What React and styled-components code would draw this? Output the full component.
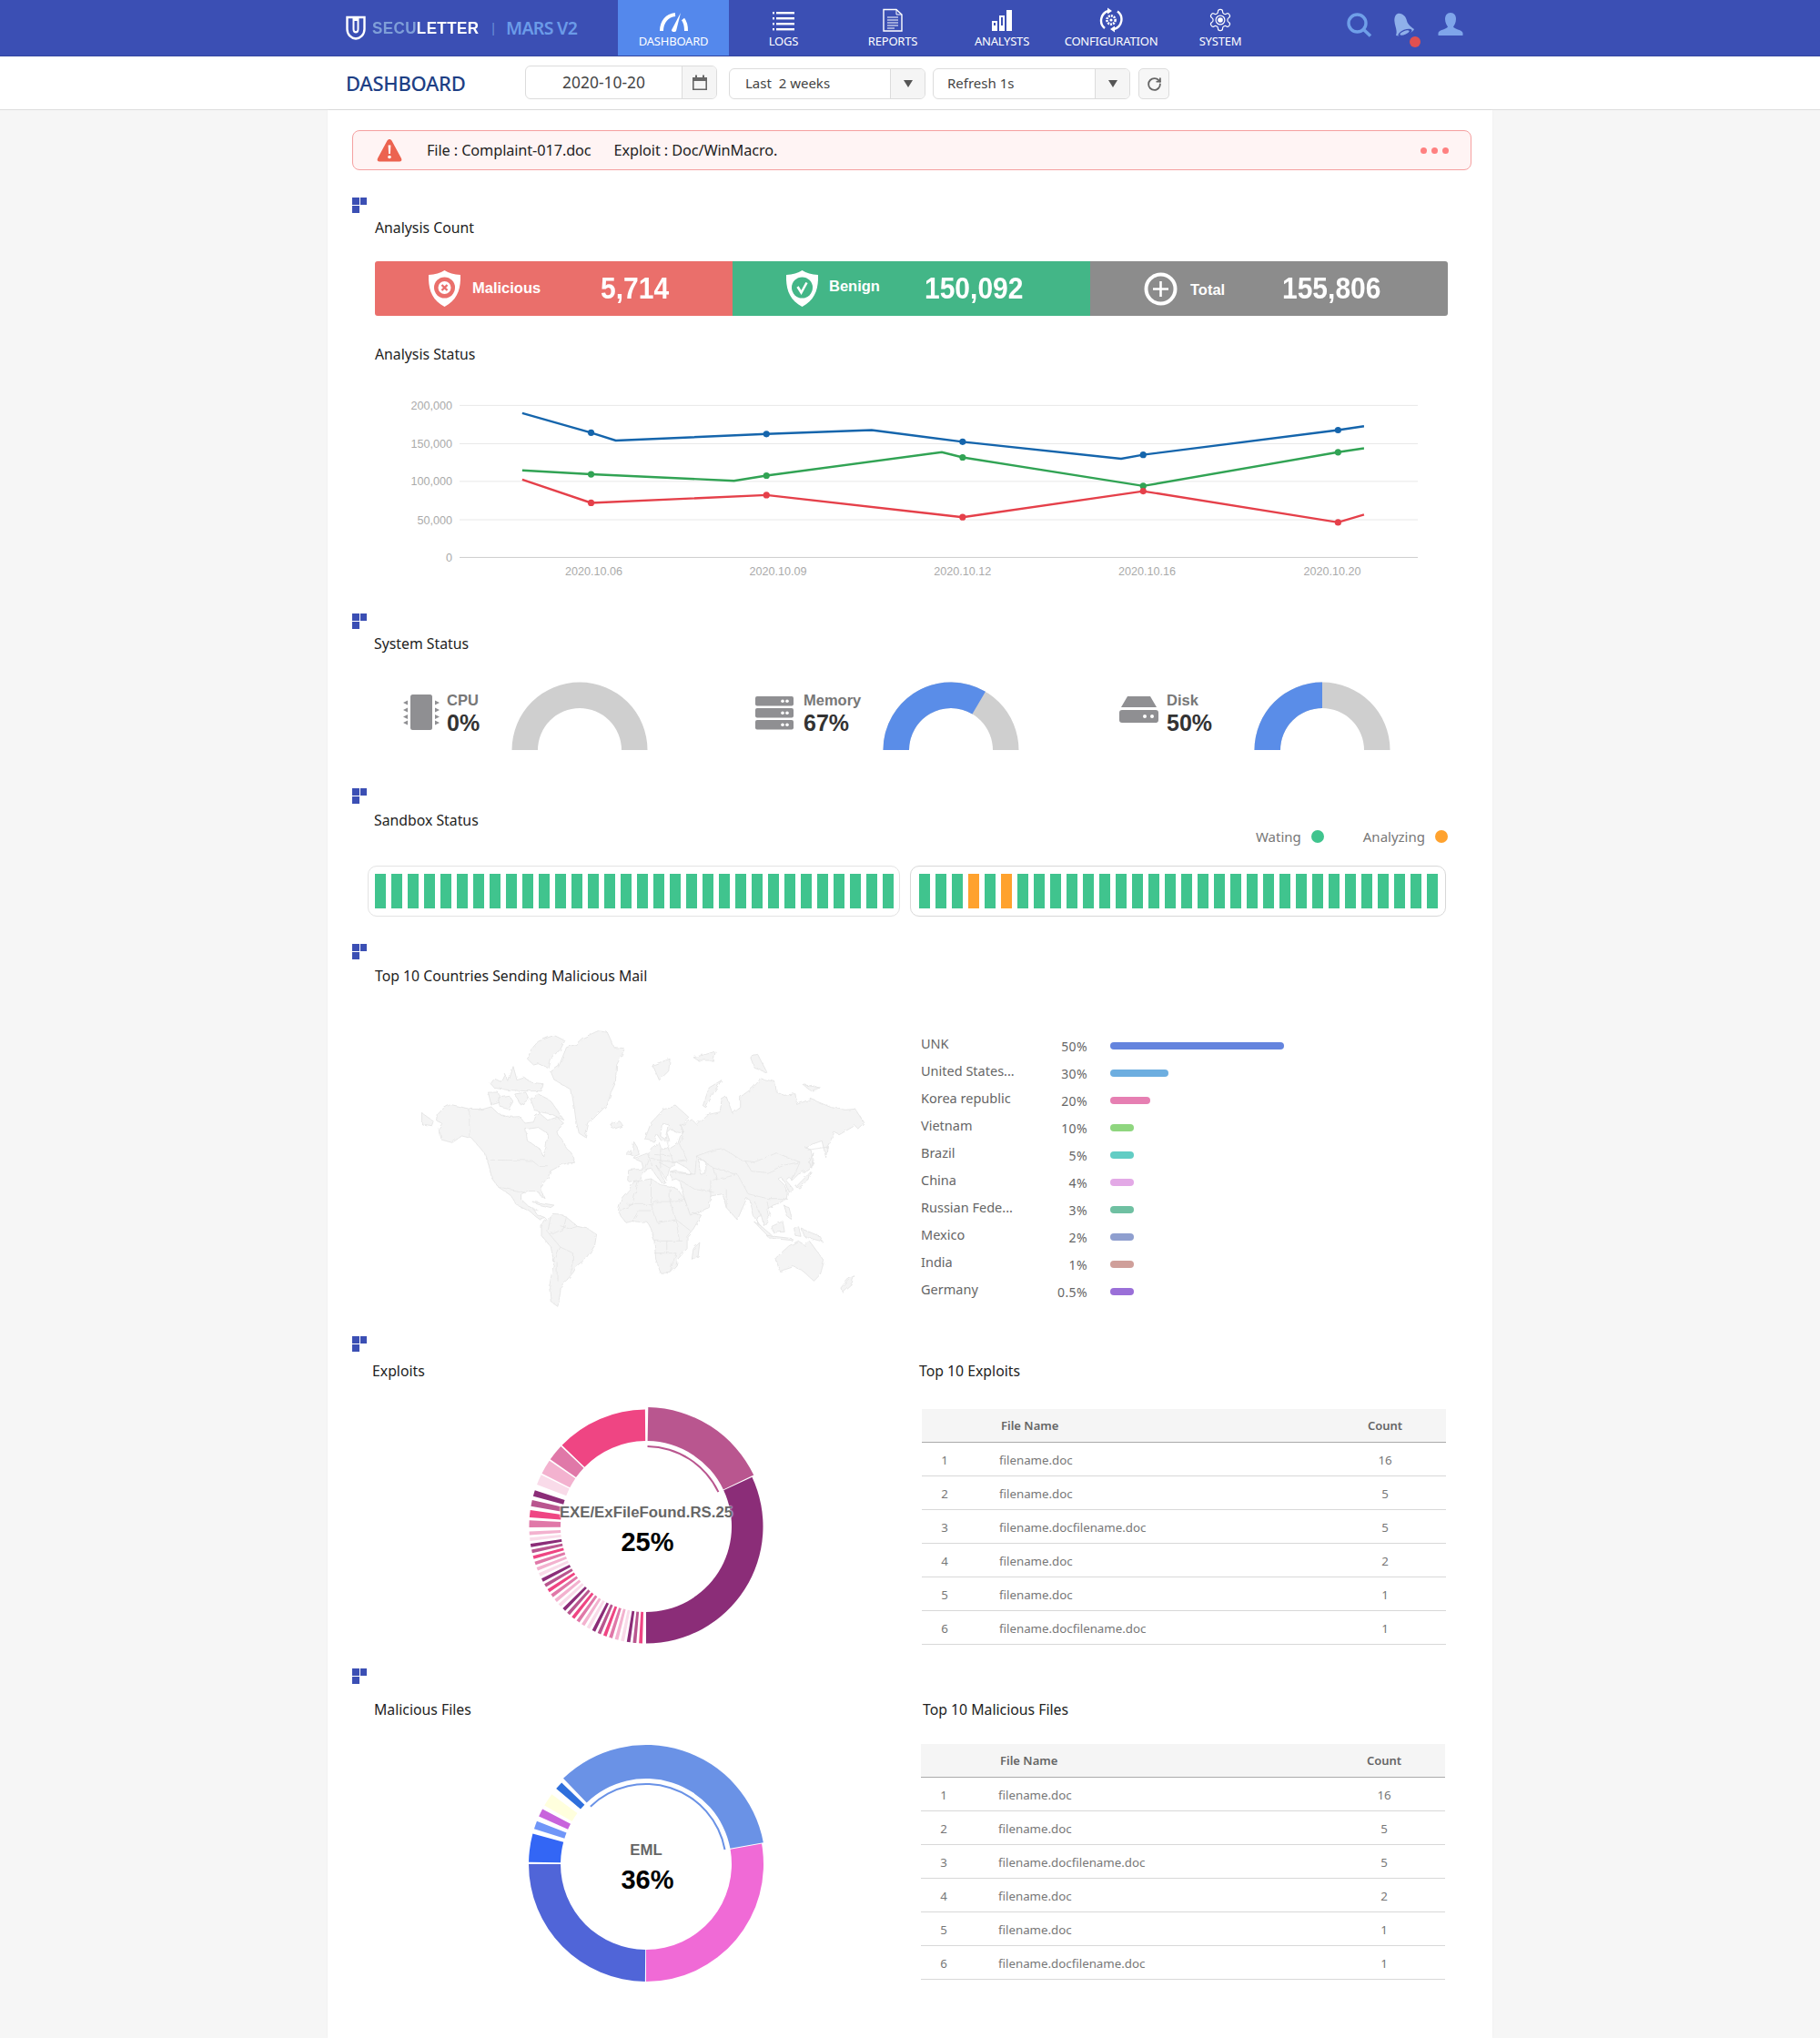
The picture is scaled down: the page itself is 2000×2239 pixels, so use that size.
import React from "react"
import styled, { createGlobalStyle } from "styled-components"
import { RotateCw } from "lucide-react"

const GlobalStyle = createGlobalStyle`
  html, body {
    margin: 0;
    padding: 0;
    background: #f6f6f6;
    font-family: "Noto Sans", "Open Sans", sans-serif;
  }
  * { box-sizing: border-box; }
`

const Header = styled.header`
  display: flex;
  height: 62px;
  padding-left: 380px;
  background: #3b4fb4;
  border-bottom: 1px solid #33459f;
`
const Logo = styled.div`
  display: flex;
  align-items: center;
  width: 299px;
  height: 61px;
  svg { margin-right: 7px; }
`
const LogoWord = styled.span`
  font: bold 17px "Liberation Sans", sans-serif;
  letter-spacing: 0.4px;
  color: #fff;
  transform: scaleY(1.1);
  em { font-style: normal; color: #7f9fd8; }
`
const LogoBar = styled.span`
  margin: 0 12px 0 14px;
  font: 14px "Liberation Sans", sans-serif;
  color: #6c90d8;
`
const LogoProduct = styled.span`
  font: 600 19.5px "Noto Sans", sans-serif;
  letter-spacing: -0.7px;
  color: #6b9be8;
`
const NavItem = styled.div`
  display: flex;
  flex-direction: column;
  align-items: center;
  width: ${p => (p.$active ? "122px" : "120px")};
  height: 61px;
  padding-top: 8px;
  background: ${p => (p.$active ? "#5488ec" : "transparent")};
  color: #fff;
  font-size: 13px;
  letter-spacing: -0.2px;
  svg { display: block; height: 28px; }
  span { line-height: 18px; margin-top: 0; }
`
const HeaderTools = styled.div`
  display: flex;
  margin-left: 79px;
  padding-top: 14px;
  gap: 23px;
`
const Bell = styled.div`
  position: relative;
  width: 26px;
  height: 28px;
`
const BellDot = styled.i`
  position: absolute;
  left: 18px;
  top: 26px;
  width: 12px;
  height: 12px;
  border-radius: 50%;
  background: #e05050;
`

const SubBar = styled.div`
  display: flex;
  align-items: flex-start;
  height: 59px;
  padding: 10px 0 0 380px;
  background: #fff;
  border-bottom: 1px solid #ddd;
`
const PageTitle = styled.h1`
  width: 197px;
  margin: 0;
  font-size: 22px;
  font-weight: 500;
  line-height: 39px;
  letter-spacing: -0.3px;
  color: #1e3f85;
`
const Control = styled.div`
  display: flex;
  width: ${p => p.$w}px;
  height: ${p => p.$h}px;
  margin-top: ${p => p.$top}px;
  margin-right: ${p => p.$gap}px;
  border: 1px solid #dcdcdc;
  border-radius: 6px;
  overflow: hidden;
  font-size: ${p => p.$size || 15}px;
  color: #444;
  background: #fff;
`
const ControlText = styled.div`
  flex: 1;
  line-height: ${p => p.$h - 3}px;
  padding-left: ${p => p.$pad}px;
  text-align: ${p => p.$align || "left"};
`
const ControlButton = styled.div`
  display: flex;
  align-items: center;
  justify-content: center;
  width: ${p => p.$w}px;
  border-left: 1px solid #dcdcdc;
  background: #f5f5f5;
  color: #5a5a5a;
`
const Caret = styled.i`
  width: 0;
  height: 0;
  border-left: 5px solid transparent;
  border-right: 5px solid transparent;
  border-top: 8px solid #555;
`
const ReloadButton = styled.div`
  display: flex;
  align-items: center;
  justify-content: center;
  width: 34px;
  height: 34px;
  margin-top: 3px;
  border: 1px solid #dcdcdc;
  border-radius: 5px;
  background: #f7f7f7;
  color: #666;
`

const Panel = styled.main`
  width: 1280px;
  min-height: 2118px;
  margin: 0 auto;
  padding: 22px 23px 20px 27px;
  background: #fff;
  box-shadow: 0 0 2px rgba(0, 0, 0, 0.05);
`
const Alert = styled.div`
  position: relative;
  display: flex;
  align-items: center;
  height: 44px;
  padding-left: 26px;
  border: 1px solid #f5a0a0;
  border-radius: 8px;
  background: #fff4f4;
  font-size: 16.3px;
  color: #222;
  letter-spacing: -0.1px;
  span { margin-right: 25px; }
  svg { margin-right: 27px; }
`
const Dots = styled.div`
  position: absolute;
  right: 24px;
  top: 18px;
  display: flex;
  gap: 5px;
  i {
    width: 7px;
    height: 7px;
    border-radius: 50%;
    background: #ff8080;
  }
`
const Section = styled.section`
  margin-top: ${p => p.$top}px;
`
const Marker = styled.div`
  display: grid;
  grid-template-columns: 7.5px 7.5px;
  grid-template-rows: 8px 8px;
  gap: 1px;
  width: 16px;
  height: 17px;
  i { background: #3b4fb4; }
`
const Title = styled.h3`
  margin: ${p => p.$top || 0}px 0 0 ${p => p.$left || 0}px;
  font-size: 15.8px;
  font-weight: 400;
  line-height: 24px;
  color: #222;
`
const CountBar = styled.div`
  display: flex;
  width: 1179px;
  height: 60px;
  margin: 25px 0 0 25px;
  border-radius: 3px;
  overflow: hidden;
  font-family: "Liberation Sans", sans-serif;
  color: #fff;
  font-weight: bold;
`
const CountCell = styled.div`
  display: flex;
  align-items: center;
  flex: 1;
  padding-left: 59px;
  background: ${p => p.$bg};
`
const CountLabel = styled.span`
  width: ${p => p.$w}px;
  margin-left: ${p => p.$gap}px;
  font-size: 16.5px;
  transform: translateY(${p => p.$shift}px);
`
const CountValue = styled.span`
  font-size: 30px;
  transform: scaleY(1.1);
`
const ChartBox = styled.div`
  height: 230px;
  margin: 19px 0 0 25px;
  svg { display: block; }
`
const StatusRow = styled.div`
  display: flex;
  margin-top: 30px;
  padding-left: 56px;
`
const StatusItem = styled.div`
  display: flex;
  margin-right: ${p => p.$gap}px;
`
const StatusIcon = styled.div`
  width: ${p => p.$w}px;
  padding-top: ${p => p.$top}px;
  svg { display: block; }
`
const StatusText = styled.div`
  width: ${p => p.$w}px;
  padding-top: 10px;
  font-family: "Liberation Sans", sans-serif;
  b { display: block; font-size: 16.5px; line-height: 20px; color: #777; }
  strong { display: block; font-size: 25px; line-height: 31px; color: #333; }
`
const Legend = styled.div`
  display: flex;
  justify-content: flex-end;
  gap: 43px;
  height: 20px;
  margin-top: -4px;
  padding-right: 26px;
  font-size: 15px;
  color: #777;
`
const LegendItem = styled.div`
  display: flex;
  align-items: center;
  gap: 11px;
  line-height: 20px;
  i {
    width: 14px;
    height: 14px;
    border-radius: 50%;
    background: ${p => p.$color};
  }
`
const SandboxRow = styled.div`
  display: flex;
  gap: 11px;
  margin: 22px 0 0 17px;
`
const SandboxBox = styled.div`
  display: flex;
  justify-content: space-between;
  width: ${p => p.$w}px;
  height: 56px;
  padding: 7.5px ${p => p.$pr}px 8.5px ${p => p.$pl}px;
  border: 1.5px solid ${p => p.$line};
  border-radius: 10px;
`
const SandboxBar = styled.i`
  width: 12.4px;
  background: ${p => (p.$busy ? "#ffa22e" : "#40c48e")};
`
const CountryRow = styled.div`
  display: flex;
  margin-top: 36px;
`
const MapBox = styled.div`
  width: 540px;
  height: 340px;
  margin-left: 53px;
  svg { display: block; }
`
const CountryList = styled.div`
  margin-left: 32px;
  padding-top: 14px;
`
const CountryLine = styled.div`
  display: flex;
  align-items: center;
  height: 30px;
  font-size: 14.5px;
  color: #666;
`
const CountryName = styled.span`
  width: 130px;
  padding-bottom: 6px;
  white-space: nowrap;
`
const CountryPct = styled.span`
  width: 53px;
  font-size: 14px;
  letter-spacing: 0.4px;
  text-align: right;
`
const CountryBar = styled.i`
  height: 8px;
  margin-left: 25px;
  border-radius: 4px;
  background: ${p => p.$color};
`
const SplitRow = styled.div`
  display: flex;
  margin-top: ${p => p.$top}px;
  height: ${p => p.$h}px;
`
const LeftColumn = styled.div`
  width: ${p => p.$w}px;
`
const RightColumn = styled.div`
  flex: 1;
`
const DonutBox = styled.div`
  position: relative;
  width: 300px;
  height: 290px;
  margin: ${p => p.$top}px 0 0 173px;
  svg { display: block; }
`
const DonutLabel = styled.div`
  position: absolute;
  left: -40px;
  right: -40px;
  top: ${p => p.$top}px;
  text-align: center;
  white-space: nowrap;
  font: bold 16.8px/22px "Liberation Sans", sans-serif;
  color: #666;
  text-shadow: 0 0 2px #fff, 0 0 2px #fff;
`
const DonutValue = styled.div`
  position: absolute;
  left: 0;
  right: 0;
  top: ${p => p.$top}px;
  padding-left: 3px;
  text-align: center;
  font: bold 29px/34px "Liberation Sans", sans-serif;
  color: #000;
`
const TableTitle = styled(Title)`
  margin: 0;
  padding-left: ${p => p.$left}px;
`
const DataTable = styled.table`
  width: 576px;
  margin: ${p => p.$top}px 0 0 ${p => p.$left}px;
  border-collapse: collapse;
  table-layout: fixed;
  font-size: 13.3px;
  color: #777;
  th {
    height: 36px;
    background: #f5f5f5;
    border-bottom: 1px solid #aaa;
    font-size: 13px;
    font-weight: 600;
    color: #666;
    text-align: left;
  }
  td {
    height: 37px;
    padding: 2px 0 0;
    border-bottom: 1px solid #d8d8d8;
  }
`
const IndexCell = styled.td`
  text-align: center;
`
const NameCell = styled.td`
  padding-left: 35px !important;
`
const NameHead = styled.th`
  padding-left: 37px !important;
`
const CountHead = styled.th`
  text-align: center !important;
`
const CountCellTd = styled.td`
  text-align: center;
`

const Icons = {
  Logo: () => (
    <svg width="22" height="27" viewBox="0 0 22 27">
      <path d="M1.5 2 H20.5 V15 C20.5 21 16 25 11 25.5 C6 25 1.5 21 1.5 15 Z" fill="none" stroke="#fff" strokeWidth="2.4" />
      <path d="M7.5 2 V15 C7.5 18 9 19.5 11 19.5 C13 19.5 14.5 18 14.5 15 V2" fill="#fff" />
      <path d="M9.5 6 V15 C9.5 16.5 10 17 11 17 C12 17 12.5 16.5 12.5 15 V6 Z" fill="#3b4fb4" />
    </svg>
  ),
  Gauge: () => (
    <svg width="32" height="28" viewBox="0 0 32 28">
      <path d="M3 26 C3 16 9 9 18 8" fill="none" stroke="#fff" strokeWidth="4" />
      <path d="M26.5 13 C29 16 30 21 30 26" fill="none" stroke="#fff" strokeWidth="4" />
      <path d="M24 6 L19 26 C18 28 13.5 27 14 25 Z" fill="#fff" />
    </svg>
  ),
  Logs: () => (
    <svg width="24" height="28" viewBox="0 0 24 28" fill="#fff">
      <rect x="0" y="5" width="2" height="2.4" /><rect x="4" y="5" width="20" height="2.4" />
      <rect x="0" y="11" width="2" height="2.4" /><rect x="4" y="11" width="20" height="2.4" />
      <rect x="0" y="17" width="2" height="2.4" /><rect x="4" y="17" width="20" height="2.4" />
      <rect x="0" y="23" width="2" height="2.4" /><rect x="4" y="23" width="20" height="2.4" />
    </svg>
  ),
  Report: () => (
    <svg width="22" height="28" viewBox="0 0 22 28" fill="none" stroke="#fff">
      <path d="M1 2.5 H15 L21 8 V26 H1 Z" strokeWidth="1.4" />
      <path d="M15 2.5 V8 H21" strokeWidth="1" />
      <path d="M5 11 H17 M5 14 H17 M5 17 H17 M5 20 H17 M5 23 H13" strokeWidth="1.1" />
    </svg>
  ),
  Bars: () => (
    <svg width="24" height="28" viewBox="0 0 24 28" fill="#fff">
      <rect x="1" y="15" width="6" height="11" />
      <rect x="3" y="17" width="2" height="3" fill="#3b4fb4" />
      <path d="M9 9 H15 V26 H9 Z M11 11 V20 H13 V11 Z" fillRule="evenodd" />
      <rect x="17" y="3" width="6" height="23" />
    </svg>
  ),
  Config: () => (
    <svg width="26" height="28" viewBox="0 0 26 28" fill="none" stroke="#fff">
      <path d="M6 23 A11 11 0 0 1 10 4" strokeWidth="2.4" />
      <path d="M20 4.5 A11 11 0 0 1 16 24" strokeWidth="2.4" />
      <path d="M9 0.5 L14 4 L9 7.5 Z M17 20.5 L12 24 L17 27.5 Z" fill="#fff" stroke="none" />
      <circle cx="13" cy="14" r="4.6" strokeWidth="2.6" strokeDasharray="2 1" />
      <circle cx="13" cy="14" r="1.6" fill="#fff" stroke="none" />
    </svg>
  ),
  Gear: () => (
    <svg width="28" height="28" viewBox="0 0 24 24" fill="none" stroke="#fff" strokeWidth="1">
      <path d="M12.2 2h-.4a2 2 0 0 0-2 2v.2a2 2 0 0 1-1 1.7l-.4.3a2 2 0 0 1-2 0l-.2-.1a2 2 0 0 0-2.7.7l-.2.4a2 2 0 0 0 .7 2.7l.2.1a2 2 0 0 1 1 1.7v.5a2 2 0 0 1-1 1.8l-.2.1a2 2 0 0 0-.7 2.7l.2.4a2 2 0 0 0 2.7.7l.2-.1a2 2 0 0 1 2 0l.4.3a2 2 0 0 1 1 1.7v.2a2 2 0 0 0 2 2h.4a2 2 0 0 0 2-2v-.2a2 2 0 0 1 1-1.7l.4-.3a2 2 0 0 1 2 0l.2.1a2 2 0 0 0 2.7-.7l.2-.4a2 2 0 0 0-.7-2.7l-.2-.1a2 2 0 0 1-1-1.8v-.5a2 2 0 0 1 1-1.7l.2-.1a2 2 0 0 0 .7-2.7l-.2-.4a2 2 0 0 0-2.7-.7l-.2.1a2 2 0 0 1-2 0l-.4-.3a2 2 0 0 1-1-1.7V4a2 2 0 0 0-2-2z" />
      <circle cx="12" cy="12" r="2.4" fill="#fff" stroke="none" />
      <circle cx="12" cy="12" r="4.2" />
    </svg>
  ),
  Search: () => (
    <svg width="28" height="27" viewBox="0 0 28 27" fill="none" stroke="#6f9fe8">
      <circle cx="11.5" cy="11.5" r="9.5" strokeWidth="3.4" />
      <path d="M18.5 18.5 L26 25.5" strokeWidth="3.6" />
    </svg>
  ),
  Bell: () => (
    <svg width="26" height="28" viewBox="0 0 26 28">
      <path d="M5 1 C10 0 14 4 15 9 C16 13 20 16 23 18 C22 22 10 27 3 25 C5 20 2 15 1.5 10 C1 6 2 2 5 1 Z" fill="#8fb0ea" />
      <ellipse cx="13" cy="22" rx="8" ry="3.4" transform="rotate(-22 13 22)" fill="#3b4fb4" />
      <ellipse cx="12.5" cy="22" rx="5.5" ry="2" transform="rotate(-22 12.5 22)" fill="#8fb0ea" />
    </svg>
  ),
  User: () => (
    <svg width="28" height="26" viewBox="0 0 28 26" fill="#7fa5ea">
      <path d="M14 0 C18 0 20 3 20 7 C20 11 18 14 17 15.5 C18 18 26 18.5 27.5 22 V25 H0.5 V22 C2 18.5 10 18 11 15.5 C10 14 8 11 8 7 C8 3 10 0 14 0 Z" />
    </svg>
  ),
  Calendar: () => (
    <svg width="18" height="18" viewBox="0 0 18 18" fill="#666">
      <path d="M1 3 H17 V17 H1 Z M2.6 7 V15.4 H15.4 V7 Z" fillRule="evenodd" />
      <rect x="4" y="0.5" width="2" height="4" /><rect x="12" y="0.5" width="2" height="4" />
    </svg>
  ),
  Warning: () => (
    <svg width="28" height="26" viewBox="0 0 28 26">
      <path d="M14 1 C15 1 16 1.6 16.5 2.6 L27 22 C28 24 27 25.5 25 25.5 H3 C1 25.5 0 24 1 22 L11.5 2.6 C12 1.6 13 1 14 1 Z" fill="#ec6350" />
      <path d="M12.6 7.5 H15.4 L14.9 17 H13.1 Z" fill="#fff" />
      <circle cx="14" cy="20.5" r="1.8" fill="#fff" />
    </svg>
  ),
  Shield: ({ color, check }) => (
    <svg width="35" height="40" viewBox="0 0 35 40">
      <path d="M17.5 0 C22 3 28 4.6 35 5 C35.5 20 32 32 17.5 40 C3 32 -0.5 20 0 5 C7 4.6 13 3 17.5 0 Z" fill="#fff" />
      <circle cx="17.5" cy="19" r="11.5" fill={color} />
      {check ? (
        <path d="M12.5 18 L16.5 24.5 L22.5 13.5" fill="none" stroke="#fff" strokeWidth="2.6" />
      ) : (
        <g>
          <circle cx="17.5" cy="19" r="7" fill="#fff" />
          <path d="M14.5 16 L20.5 22 M20.5 16 L14.5 22" stroke={color} strokeWidth="2.4" />
        </g>
      )}
    </svg>
  ),
  Plus: () => (
    <svg width="37" height="37" viewBox="0 0 37 37" fill="none" stroke="#fff">
      <circle cx="18.5" cy="18.5" r="16" strokeWidth="4" />
      <path d="M18.5 10 V27 M10 18.5 H27" strokeWidth="2.6" />
    </svg>
  ),
  Cpu: () => (
    <svg width="40" height="40" viewBox="0 0 40 40" fill="#8f8f92">
      <rect x="8" y="0" width="24" height="39" rx="2.5" />
      <path d="M0 9 L5 6.5 V11.5 Z M0 17 L5 14.5 V19.5 Z M0 24.5 L5 22 V27 Z M0 31 L5 28.5 V33.5 Z" />
      <path d="M40 9 L35 6.5 V11.5 Z M40 17 L35 14.5 V19.5 Z M40 24.5 L35 22 V27 Z M40 31 L35 28.5 V33.5 Z" />
    </svg>
  ),
  Server: () => (
    <svg width="42" height="37" viewBox="0 0 42 37" fill="#8f8f92">
      {[0, 13, 26].map(y => (
        <g key={y}>
          <rect x="0" y={y} width="42" height="10.5" rx="2" />
          <circle cx="30" cy={y + 5.2} r="1.8" fill="#fff" />
          <circle cx="35" cy={y + 5.2} r="1.8" fill="#fff" />
        </g>
      ))}
    </svg>
  ),
  Disk: () => (
    <svg width="43" height="29" viewBox="0 0 43 29" fill="#8f8f92">
      <path d="M9 0 H34 L41 12 H2 Z" />
      <rect x="0" y="15" width="43" height="14" rx="3" />
      <circle cx="28" cy="22" r="2" fill="#fff" />
      <circle cx="36" cy="22" r="2" fill="#fff" />
    </svg>
  ),
}

const polar = (cx, cy, r, deg) => {
  const rad = ((deg - 90) * Math.PI) / 180
  return [cx + r * Math.cos(rad), cy + r * Math.sin(rad)]
}
const ringPath = (cx, cy, r0, r1, a0, a1) => {
  const large = a1 - a0 > 180 ? 1 : 0
  const [x0, y0] = polar(cx, cy, r1, a0)
  const [x1, y1] = polar(cx, cy, r1, a1)
  const [x2, y2] = polar(cx, cy, r0, a1)
  const [x3, y3] = polar(cx, cy, r0, a0)
  return `M${x0} ${y0} A${r1} ${r1} 0 ${large} 1 ${x1} ${y1} L${x2} ${y2} A${r0} ${r0} 0 ${large} 0 ${x3} ${y3} Z`
}

const Gauge = ({ value }) => {
  const end = -90 + 180 * (value / 100)
  return (
    <svg width="150" height="75" viewBox="0 0 150 75">
      <path d={ringPath(75, 75, 46, 74.5, -90, 90)} fill="#cfcfcf" />
      {value > 0 && <path d={ringPath(75, 75, 46, 74.5, -90, end)} fill="#5a8de8" />}
    </svg>
  )
}

const S = 2000 / 1401
const chartLines = [
  { color: "#1565ac", pts: [[402, 318], [455, 333], [474, 339], [590, 334], [671, 331], [741, 340], [863, 353], [880, 350], [1030, 331], [1050, 328]], dots: [1, 3, 5, 7, 8] },
  { color: "#31a354", pts: [[402, 362], [455, 365], [565, 370], [590, 366], [725, 348], [741, 352], [880, 374], [1030, 348], [1050, 345]], dots: [1, 3, 5, 6, 7] },
  { color: "#e5404a", pts: [[402, 369], [455, 387], [590, 381], [741, 398], [880, 378], [1030, 402], [1050, 396]], dots: [1, 2, 3, 4, 5] },
]
const yTicks = [["200,000", 312], ["150,000", 341.5], ["100,000", 370.5], ["50,000", 400], ["0", 429]]
const xTicks = [["2020.10.06", 457], ["2020.10.09", 599], ["2020.10.12", 741], ["2020.10.16", 883], ["2020.10.20", 1025.5]]

const LineChart = () => (
  <svg width="1179" height="230" viewBox="412 420 1179 230" fontFamily="Liberation Sans, sans-serif" fontSize="12.6" fill="#aaa">
    {yTicks.map(([label, y], i) => (
      <g key={label}>
        <line x1="505" x2="1558" y1={y * S} y2={y * S} stroke={i === 4 ? "#ccc" : "#e8e8e8"} />
        <text x="497" y={y * S + 4.5} textAnchor="end">{label}</text>
      </g>
    ))}
    {xTicks.map(([label, x]) => (
      <text key={label} x={x * S} y="631.5" textAnchor="middle">{label}</text>
    ))}
    {chartLines.map(line => (
      <g key={line.color}>
        <polyline fill="none" stroke={line.color} strokeWidth="2.4" points={line.pts.map(p => `${p[0] * S},${p[1] * S}`).join(" ")} />
        {line.dots.map(i => (
          <circle key={i} cx={line.pts[i][0] * S} cy={line.pts[i][1] * S} r="3.6" fill={line.color} />
        ))}
      </g>
    ))}
  </svg>
)

const land = [
  // alaska, canada, usa, mexico, central america
  "M120 312 L135 295 L160 280 L220 295 L262 296 L290 288 L312 310 L345 322 L380 320 L398 342 L425 338 L432 318 L445 310 L470 332 L500 322 L524 345 L496 366 L500 378 L518 398 L530 425 L546 440 L556 472 L530 474 L510 482 L478 500 L472 520 L455 540 L450 565 L462 590 L448 582 L438 566 L405 566 L388 574 L388 595 L405 612 L424 622 L436 644 L464 656 L445 660 L412 632 L372 612 L352 580 L338 570 L312 552 L292 524 L282 480 L268 440 L240 406 L228 392 L196 384 L165 406 L130 396 L125 362 L136 346 L118 336 Z",
  // greenland
  "M480 172 L505 155 L530 92 L560 82 L580 62 L630 38 L660 42 L682 92 L716 95 L700 130 L690 150 L686 210 L672 240 L660 282 L622 320 L600 345 L590 388 L570 375 L560 330 L555 292 L545 232 L490 198 Z",
  // arctic islands
  "M405 130 L418 98 L440 72 L490 52 L525 70 L510 100 L478 128 L470 160 L440 146 L425 150 Z",
  "M288 212 L300 195 L320 205 L332 178 L345 205 L360 155 L372 200 L395 192 L420 208 L456 212 L450 236 L400 236 L340 232 L300 226 Z",
  "M280 240 L312 240 L322 272 L290 282 Z",
  "M310 255 L345 250 L360 270 L345 296 L318 288 Z",
  "M365 246 L400 240 L410 262 L385 282 Z",
  "M415 262 L440 246 L470 262 L482 272 L522 332 L482 312 L430 302 Z",
  "M670 345 L700 335 L710 350 L680 362 Z",
  "M68 308 L105 335 L100 350 L68 345 Z",
  // britain, ireland
  "M735 448 L742 425 L745 403 L755 420 L762 445 L745 452 Z",
  "M722 440 L733 428 L736 445 L724 448 Z",
  // south america
  "M450 682 L465 660 L485 640 L510 642 L530 652 L565 682 L600 690 L626 708 L620 746 L590 790 L565 810 L550 836 L530 860 L512 880 L510 902 L502 946 L480 930 L475 880 L490 800 L480 750 L450 712 Z",
  // africa
  "M695 630 L705 590 L730 560 L745 535 L800 525 L830 545 L860 550 L885 560 L905 590 L925 635 L960 645 L935 690 L915 715 L915 755 L885 790 L880 810 L860 832 L830 835 L815 790 L810 730 L800 690 L790 670 L740 665 L720 670 L700 645 Z",
  // eurasia
  "M725 530 L728 497 L775 492 L770 470 L745 458 L790 440 L800 425 L825 405 L832 425 L860 425 L885 410 L893 385 L905 375 L895 350 L930 330 L945 345 L975 315 L1020 305 L1025 265 L1040 255 L1060 310 L1085 290 L1085 255 L1125 225 L1150 195 L1195 205 L1200 240 L1225 250 L1260 245 L1265 280 L1310 262 L1375 290 L1420 298 L1452 295 L1480 340 L1460 360 L1450 350 L1400 380 L1385 372 L1362 420 L1358 455 L1345 400 L1290 420 L1310 430 L1318 480 L1290 500 L1270 510 L1250 530 L1240 520 L1230 530 L1255 560 L1240 570 L1228 540 L1215 520 L1205 525 L1225 545 L1235 570 L1232 590 L1210 605 L1190 612 L1170 625 L1176 655 L1160 680 L1150 640 L1136 650 L1142 680 L1165 702 L1128 650 L1115 595 L1105 590 L1075 660 L1040 620 L1028 575 L990 582 L985 620 L925 645 L900 570 L893 535 L880 525 L865 530 L860 505 L880 500 L930 510 L915 490 L880 470 L860 490 L855 505 L850 530 L830 500 L815 480 L845 535 L835 540 L800 490 L780 495 L770 510 L760 530 L730 535 Z",
  // scandinavia
  "M780 395 L800 340 L840 296 L880 285 L920 322 L895 350 L905 375 L885 372 L860 362 L850 372 L858 396 L835 402 L820 380 L808 402 Z",
  // australia, nz, madagascar
  "M1198 786 L1240 746 L1270 730 L1290 745 L1305 730 L1352 796 L1340 840 L1320 862 L1280 826 L1255 815 L1210 830 Z",
  "M1405 885 L1430 855 L1448 845 L1440 870 L1410 898 Z",
  "M930 790 L935 755 L955 735 L950 780 Z",
  // indonesia, philippines, new guinea, japan
  "M1130 668 L1150 680 L1190 716 L1175 716 Z",
  "M1170 712 L1250 722 L1248 728 L1175 720 Z",
  "M1185 682 L1220 665 L1226 700 L1190 702 Z",
  "M1256 685 L1270 680 L1278 715 L1260 712 Z",
  "M1225 615 L1240 620 L1250 660 L1235 650 Z",
  "M1280 690 L1340 715 L1346 732 L1290 716 Z",
  "M1262 552 L1300 512 L1310 502 L1304 530 L1272 555 Z",
  "M1305 470 L1318 440 L1312 490 Z",
  // polar islands
  "M805 150 L860 130 L856 170 L826 200 Z",
  "M935 125 L975 115 L1005 105 L1000 135 L950 135 Z",
  "M965 285 L985 225 L1025 200 L1000 240 L975 290 Z",
  "M1115 120 L1140 115 L1170 175 L1130 160 Z",
  "M1285 215 L1340 225 L1310 235 Z",
  "M420 600 L490 612 L480 620 L440 610 Z",
]
const water = [
  "M400 362 L440 356 L470 376 L465 420 L455 450 L445 426 L405 400 Z",
  "M950 460 L975 470 L975 510 L958 510 Z",
  "M835 340 L855 345 L845 395 L830 385 Z",
]
const borders = [
  "M220 295 L220 390", "M285 463 L420 465 L440 482 L470 482", "M312 552 L350 560 L395 570",
  "M420 625 L440 630", "M480 650 L470 700 L510 750 L490 800", "M530 650 L520 690 L480 710", "M565 682 L540 690 L510 680",
  "M510 750 L550 770 L550 800 L540 836", "M500 800 L500 860",
  "M725 610 L800 610 L820 600 L880 600 L905 592", "M760 530 L740 610 L700 630", "M800 525 L800 610 L820 670", "M860 556 L860 600 L880 660 L925 696",
  "M740 666 L760 630 L800 630", "M820 670 L880 660", "M810 730 L900 730", "M810 770 L880 770 L860 832", "M850 730 L850 770", "M880 660 L890 730",
  "M780 490 L790 460", "M790 435 L800 480", "M830 425 L830 490", "M800 460 L870 470 L915 465", "M850 400 L870 470", "M865 505 L940 510", "M810 445 L860 450", "M825 470 L860 490",
  "M940 510 L945 450 L1000 430 L1030 425 L1090 465 L1130 470 L1200 440 L1275 470 L1250 530",
  "M1100 465 L1120 500 L1170 505 L1225 480 L1275 470",
  "M1075 510 L1110 575 L1170 590 L1232 590", "M945 450 L1000 490 L1070 510", "M990 585 L990 530 L1040 520 L1075 510", "M1040 620 L1040 560",
  "M890 530 L940 560 L1000 570", "M1130 600 L1150 650", "M1170 600 L1180 650", "M1365 420 L1300 430",
  "M905 375 L890 410 L915 465", "M1000 490 L1010 530",
]
const WorldMap = () => (
  <svg width="540" height="340" viewBox="0 0 1568 1020" preserveAspectRatio="none">
    <defs>
      <filter id="coast" x="-2%" y="-2%" width="104%" height="104%">
        <feTurbulence type="fractalNoise" baseFrequency="0.045" numOctaves="3" seed="4" />
        <feDisplacementMap in="SourceGraphic" scale="12" />
      </filter>
    </defs>
    <g filter="url(#coast)">
      <g fill="#f4f4f4" stroke="#e2e2e2" strokeWidth="2.4" strokeLinejoin="round">
        {land.map(d => <path key={d} d={d} />)}
      </g>
      <g fill="#fff" stroke="#e2e2e2" strokeWidth="2.4">
        {water.map(d => <path key={d} d={d} />)}
      </g>
      <g fill="none" stroke="#e2e2e2" strokeWidth="2.2">
        {borders.map(d => <path key={d} d={d} />)}
      </g>
    </g>
  </svg>
)

const pinks = ["#8b2d78", "#b9568f", "#ef4583", "#e078a8", "#f3b2cf", "#f9dbe9"]
const exploitSlices = [
  [65, 180, "#8b2d78"], [314, 359.5, "#ef4583"], [305, 313.2, "#e078a8"], [297, 304.2, "#f3b2cf"], [291, 296.2, "#f9dbe9"],
  [285, 288, "#8b2d78"], [280, 283, "#b9568f"], [274.5, 278, "#ef4583"], [269.5, 273, "#e078a8"],
]
// the long tail of tiny slices, cycling through the palette
for (let i = 0; i < 29; i++) {
  const start = 267.5 - i * 3
  exploitSlices.push([start - 1.7, start, pinks[(i + 4) % 6]])
}
const fileSlices = [
  [80, 180, "#f06ad6"], [180.5, 270, "#5065d8"], [271, 285, "#3366f5"], [287.5, 291.5, "#7096f8"],
  [294, 298, "#c864dc"], [300, 306.5, "#ffffdd"], [310, 314, "#2f6fdc"],
]

const Donut = ({ slices, active, color, outer }) => (
  <svg width="300" height="290" viewBox="0 0 300 290">
    {slices.map(([a0, a1, fill]) => (
      <path key={a0} d={ringPath(150, 147, 94, outer, a0, a1)} fill={fill} />
    ))}
    <path d={ringPath(150, 147, 94, 131, active[0], active[1])} fill={color} />
    <path d={ringPath(150, 147, 87, 89, active[0], active[1])} fill={color} />
  </svg>
)

const countries = [
  ["UNK", "50%", 191, "#6484de"], ["United States...", "30%", 64, "#6daee0"], ["Korea republic", "20%", 44, "#e67fb2"],
  ["Vietnam", "10%", 26, "#8fd67f"], ["Brazil", "5%", 26, "#62cdc4"], ["China", "4%", 26, "#e3a9e6"],
  ["Russian Fede...", "3%", 26, "#6fc0a2"], ["Mexico", "2%", 26, "#8f9fcf"], ["India", "1%", 26, "#cf9f9a"], ["Germany", "0.5%", 26, "#9a6fd8"],
]
const rows = [
  ["filename.doc", 16], ["filename.doc", 5], ["filename.docfilename.doc", 5],
  ["filename.doc", 2], ["filename.doc", 1], ["filename.docfilename.doc", 1],
]
const navItems = [
  ["DASHBOARD", Icons.Gauge], ["LOGS", Icons.Logs], ["REPORTS", Icons.Report],
  ["ANALYSTS", Icons.Bars], ["CONFIGURATION", Icons.Config], ["SYSTEM", Icons.Gear],
]
const sandboxBars = Array.from({ length: 32 })

const SectionMarker = () => (
  <Marker>
    <i />
    <i />
    <i />
  </Marker>
)

const FileTable = ({ top, left }) => (
  <DataTable $top={top} $left={left}>
    <colgroup>
      <col width="50" />
      <col />
      <col width="134" />
    </colgroup>
    <thead>
      <tr>
        <th />
        <NameHead>File Name</NameHead>
        <CountHead>Count</CountHead>
      </tr>
    </thead>
    <tbody>
      {rows.map((row, index) => (
        <tr key={index}>
          <IndexCell>{index + 1}</IndexCell>
          <NameCell>{row[0]}</NameCell>
          <CountCellTd>{row[1]}</CountCellTd>
        </tr>
      ))}
    </tbody>
  </DataTable>
)

const App = () => {
  return (
    <>
      <GlobalStyle />
      <Header>
        <Logo>
          <Icons.Logo />
          <LogoWord><em>SECU</em>LETTER</LogoWord>
          <LogoBar>|</LogoBar>
          <LogoProduct>MARS V2</LogoProduct>
        </Logo>
        {navItems.map(([label, Icon], index) => (
          <NavItem key={label} $active={index === 0}>
            <Icon />
            <span>{label}</span>
          </NavItem>
        ))}
        <HeaderTools>
          <Icons.Search />
          <Bell>
            <Icons.Bell />
            <BellDot />
          </Bell>
          <Icons.User />
        </HeaderTools>
      </Header>

      <SubBar>
        <PageTitle>DASHBOARD</PageTitle>
        <Control $w={211} $h={37} $top={0} $gap={13} $size={17.4}>
          <ControlText $h={37} $pad={0} $align="center">2020-10-20</ControlText>
          <ControlButton $w={38}><Icons.Calendar /></ControlButton>
        </Control>
        <Control $w={216} $h={34} $top={3} $gap={8}>
          <ControlText $h={34} $pad={17}>Last&nbsp; 2 weeks</ControlText>
          <ControlButton $w={38}><Caret /></ControlButton>
        </Control>
        <Control $w={217} $h={34} $top={3} $gap={9}>
          <ControlText $h={34} $pad={15}>Refresh 1s</ControlText>
          <ControlButton $w={38}><Caret /></ControlButton>
        </Control>
        <ReloadButton><RotateCw size={17} strokeWidth={2.6} /></ReloadButton>
      </SubBar>

      <Panel>
        <Alert>
          <Icons.Warning />
          <span>File : Complaint-017.doc</span>
          <span>Exploit : Doc/WinMacro.</span>
          <Dots><i /><i /><i /></Dots>
        </Alert>

        <Section $top={30}>
          <SectionMarker />
          <Title $top={4} $left={25}>Analysis Count</Title>
          <CountBar>
            <CountCell $bg="#ea6f6b">
              <Icons.Shield color="#ea6f6b" />
              <CountLabel $w={141} $gap={13} $shift={-1}>Malicious</CountLabel>
              <CountValue>5,714</CountValue>
            </CountCell>
            <CountCell $bg="#43b687">
              <Icons.Shield color="#43b687" check />
              <CountLabel $w={105} $gap={12} $shift={-3}>Benign</CountLabel>
              <CountValue>150,092</CountValue>
            </CountCell>
            <CountCell $bg="#8c8c8c">
              <Icons.Plus />
              <CountLabel $w={101} $gap={14} $shift={1}>Total</CountLabel>
              <CountValue>155,806</CountValue>
            </CountCell>
          </CountBar>
          <Title $top={30} $left={25}>Analysis Status</Title>
          <ChartBox><LineChart /></ChartBox>
        </Section>

        <Section $top={24}>
          <SectionMarker />
          <Title $top={4} $left={24}>System Status</Title>
          <StatusRow>
            <StatusItem $gap={118}>
              <StatusIcon $w={48} $top={14}><Icons.Cpu /></StatusIcon>
              <StatusText $w={71}><b>CPU</b><strong>0%</strong></StatusText>
              <Gauge value={0} />
            </StatusItem>
            <StatusItem $gap={110}>
              <StatusIcon $w={53} $top={16}><Icons.Server /></StatusIcon>
              <StatusText $w={87}><b>Memory</b><strong>67%</strong></StatusText>
              <Gauge value={67} />
            </StatusItem>
            <StatusItem $gap={0}>
              <StatusIcon $w={52} $top={16}><Icons.Disk /></StatusIcon>
              <StatusText $w={96}><b>Disk</b><strong>50%</strong></StatusText>
              <Gauge value={50} />
            </StatusItem>
          </StatusRow>
        </Section>

        <Section $top={42}>
          <SectionMarker />
          <Title $top={6} $left={24}>Sandbox Status</Title>
          <Legend>
            <LegendItem $color="#40c48e">Wating<i /></LegendItem>
            <LegendItem $color="#ffa22e">Analyzing<i /></LegendItem>
          </Legend>
          <SandboxRow>
            <SandboxBox $w={585} $pl={7} $pr={6} $line="#e3e3e3">
              {sandboxBars.map((_, i) => <SandboxBar key={i} />)}
            </SandboxBox>
            <SandboxBox $w={589} $pl={9} $pr={8} $line="#d8d8d8">
              {sandboxBars.map((_, i) => <SandboxBar key={i} $busy={i === 3 || i === 5} />)}
            </SandboxBox>
          </SandboxRow>
        </Section>

        <Section $top={30}>
          <SectionMarker />
          <Title $top={6} $left={25}>Top 10 Countries Sending Malicious Mail</Title>
          <CountryRow>
            <MapBox><WorldMap /></MapBox>
            <CountryList>
              {countries.map(([name, pct, width, color]) => (
                <CountryLine key={name}>
                  <CountryName>{name}</CountryName>
                  <CountryPct>{pct}</CountryPct>
                  <CountryBar $color={color} style={{ width }} />
                </CountryLine>
              ))}
            </CountryList>
          </CountryRow>
        </Section>

        <Section $top={8}>
          <SectionMarker />
          <SplitRow $top={9} $h={326}>
            <LeftColumn $w={623}>
              <Title $left={22}>Exploits</Title>
              <DonutBox $top={12}>
                <Donut slices={exploitSlices} active={[1, 64.5]} color="#b9568f" outer={128.5} />
                <DonutLabel $top={121}>EXE/ExFileFound.RS.25</DonutLabel>
                <DonutValue $top={147}>25%</DonutValue>
              </DonutBox>
            </LeftColumn>
            <RightColumn>
              <TableTitle $left={0}>Top 10 Exploits</TableTitle>
              <FileTable top={30} left={3} />
            </RightColumn>
          </SplitRow>
        </Section>

        <Section $top={13}>
          <SectionMarker />
          <SplitRow $top={16} $h={325}>
            <LeftColumn $w={625}>
              <Title $left={24}>Malicious Files</Title>
              <DonutBox $top={11}>
                <Donut slices={fileSlices} active={[316, 439.5]} color="#6a92e6" outer={129} />
                <DonutLabel $top={121}>EML</DonutLabel>
                <DonutValue $top={147}>36%</DonutValue>
              </DonutBox>
            </LeftColumn>
            <RightColumn>
              <TableTitle $left={2}>Top 10 Malicious Files</TableTitle>
              <FileTable top={26} left={0} />
            </RightColumn>
          </SplitRow>
        </Section>
      </Panel>
    </>
  )
}

export default App
